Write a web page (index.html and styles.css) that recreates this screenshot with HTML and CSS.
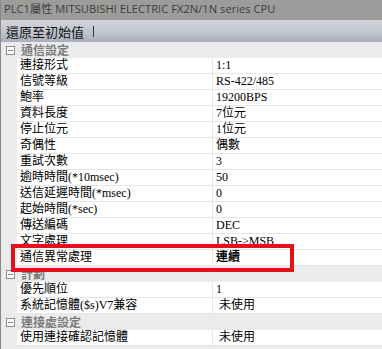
FILE: index.html
```html
<!DOCTYPE html>
<html lang="zh-Hant">
<head>
    <meta charset="UTF-8">
    <title>PLC1屬性</title>
    <link rel="stylesheet" href="styles.css">
</head>
<body>
    <div class="window">
        <div class="title">PLC1屬性 MITSUBISHI ELECTRIC FX2N/1N series CPU</div>
        <div class="toolbar">
            <span class="tool">還原至初始值</span>
            <span class="sep"></span>
        </div>
        <div class="grid">
            <!-- 通信設定 -->
            <div class="cat"><span class="box"></span>通信設定</div>
            <div class="row"><div class="name">連接形式</div><div class="val">1:1</div></div>
            <div class="row"><div class="name">信號等級</div><div class="val">RS-422/485</div></div>
            <div class="row"><div class="name">鮑率</div><div class="val">19200BPS</div></div>
            <div class="row"><div class="name">資料長度</div><div class="val">7位元</div></div>
            <div class="row"><div class="name">停止位元</div><div class="val">1位元</div></div>
            <div class="row"><div class="name">奇偶性</div><div class="val">偶數</div></div>
            <div class="row"><div class="name">重試次數</div><div class="val">3</div></div>
            <div class="row"><div class="name">逾時時間(*10msec)</div><div class="val">50</div></div>
            <div class="row"><div class="name">送信延遲時間(*msec)</div><div class="val">0</div></div>
            <div class="row"><div class="name">起始時間(*sec)</div><div class="val">0</div></div>
            <div class="row"><div class="name">傳送編碼</div><div class="val">DEC</div></div>
            <div class="row"><div class="name">文字處理</div><div class="val">LSB-&gt;MSB</div></div>
            <div class="row mark">
                <div class="name">通信異常處理</div><div class="val bold">連續</div>
                <span class="redbox"></span>
            </div>
            <!-- 計劃 -->
            <div class="cat"><span class="box"></span>計劃</div>
            <div class="row"><div class="name">優先順位</div><div class="val">1</div></div>
            <div class="row"><div class="name">系統記憶體($s)V7兼容</div><div class="val"> 未使用</div></div>
            <!-- 連接處設定 -->
            <div class="cat"><span class="box"></span>連接處設定</div>
            <div class="row"><div class="name">使用連接確認記憶體</div><div class="val"> 未使用</div></div>
        </div>
    </div>
</body>
</html>
```

FILE: styles.css
```css
body {
    margin: 0;
    background: #ebebeb;
}

.window {
    width: 382px;
    height: 349px;
    overflow: hidden;
    border-left: 1px solid #8a8a8a;
    box-sizing: border-box;
}

.title {
    height: 20px;
    line-height: 20px;
    padding-left: 3px;
    background: #9c9d9b;
    color: #3c3c3c;
    font: 11.2px "Open Sans", "Noto Sans CJK TC", sans-serif;
    white-space: nowrap;
}

.toolbar {
    height: 22px;
    display: flex;
    align-items: center;
    padding-left: 5px;
    background: linear-gradient(#d2d5da, #c3c7cf 50%, #a9b0bd);
    font: 13px "Noto Sans CJK TC", sans-serif;
    color: #111;
}

.sep {
    width: 1px;
    height: 11px;
    margin-left: 9px;
    background: #333;
}

.grid {
    font: 12px "Liberation Serif", "Noto Sans CJK TC", serif;
    color: #000;
}

.cat {
    height: 16px;
    line-height: 16px;
    display: flex;
    align-items: center;
    background: #ebebeb;
    color: #7c7c7c;
    font-weight: bold;
    font-family: "Noto Sans CJK TC", sans-serif;
}

.box {
    width: 7px;
    height: 7px;
    margin: 0 6px 0 5px;
    border: 1px solid #8e8e8e;
    background: linear-gradient(#8e8e8e, #8e8e8e) center / 5px 1px no-repeat #fff;
}

.row {
    position: relative;
    display: flex;
    height: 16px;
    line-height: 15px;
    margin-left: 16px;
    background: #fff;
    border-bottom: 1px solid #e6e6e6;
    box-sizing: border-box;
}

.name {
    width: 192px;
    padding-left: 3px;
    border-right: 1px solid #e6e6e6;
    white-space: nowrap;
}

.val {
    padding-left: 3px;
    white-space: pre;
}

.bold {
    font-weight: bold;
}

.redbox {
    position: absolute;
    left: -6px;
    top: -6px;
    width: 283px;
    height: 28px;
    border: 4px solid #e2121a;
    box-sizing: border-box;
    pointer-events: none;
}
```
